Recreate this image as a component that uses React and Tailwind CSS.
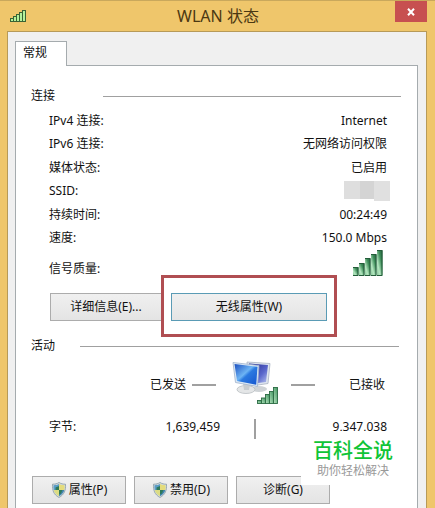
import React from "react";

const connectionRows = [
  { label: "IPv4 连接:", value: "Internet" },
  { label: "IPv6 连接:", value: "无网络访问权限" },
  { label: "媒体状态:", value: "已启用" },
  { label: "SSID:", value: null },
  { label: "持续时间:", value: "00:24:49" },
  { label: "速度:", value: "150.0 Mbps" },
];

const buttonClasses =
  "h-7 border border-[#acacac] bg-linear-to-b from-[#f0f0f0] to-[#e4e4e4] flex items-center justify-center";

const TitleSignal = () => (
  <svg className="w-4 h-3" viewBox="0 0 16 12" shapeRendering="crispEdges">
    <path
      d="M.5 11.5v-3h3v-2h3v-2h3v-2h3v-2h3v11zM3.5 8.5v3M6.5 6.5v5M9.5 4.5v7M12.5 2.5v9"
      fill="#b4f29c"
      stroke="#3a6334"
      strokeWidth="1"
    />
  </svg>
);

const qualityBars = [
  { x: 0, y: 17 },
  { x: 6, y: 13 },
  { x: 12, y: 8 },
  { x: 18, y: 4 },
  { x: 24, y: 0 },
];

const QualitySignal = () => (
  <svg className="w-[30px] h-[26px]" viewBox="0 0 30 26">
    <defs>
      <linearGradient id="qualityBar" x1="1" y1="0" x2="0" y2="1">
        <stop offset="0" stopColor="#1d5c36" />
        <stop offset="0.35" stopColor="#3f8f5b" />
        <stop offset="0.7" stopColor="#b4e6bf" />
        <stop offset="1" stopColor="#86c698" />
      </linearGradient>
    </defs>
    {qualityBars.map(({ x, y }) => (
      <g key={x}>
        <rect x={x} y={y} width="5.500" height={26 - y} fill="url(#qualityBar)" />
        <path d={`M${x} ${y + 0.5}h5v${25 - y}h-5`} fill="none" stroke="#245c3a" strokeWidth="1" />
      </g>
    ))}
  </svg>
);

const Monitors = () => (
  <svg className="w-12 h-11" viewBox="0 0 48 44">
    <defs>
      <linearGradient id="screenFront" x1="0" y1="0" x2="1" y2="1">
        <stop offset="0" stopColor="#1c4fc0" />
        <stop offset="0.45" stopColor="#6db4f4" />
        <stop offset="0.55" stopColor="#2b79e0" />
        <stop offset="1" stopColor="#1556cf" />
      </linearGradient>
      <linearGradient id="screenBack" x1="0" y1="0" x2="1" y2="1">
        <stop offset="0" stopColor="#20248c" />
        <stop offset="0.6" stopColor="#5a68cc" />
        <stop offset="1" stopColor="#bcc8f2" />
      </linearGradient>
      <linearGradient id="miniBars" x1="1" y1="0" x2="0" y2="1">
        <stop offset="0" stopColor="#3f9560" />
        <stop offset="1" stopColor="#b5e2bd" />
      </linearGradient>
    </defs>
    <ellipse cx="27" cy="28" rx="8" ry="3" fill="#cfd3d6" />
    <path d="M15 1l23 1.500-2 20-20 3z" fill="#dfe6ef" stroke="#a9b3c2" strokeWidth="0.8" />
    <path d="M17 2.500l19 1.500-2 17-16 2z" fill="url(#screenBack)" />
    <ellipse cx="14" cy="28.500" rx="9" ry="4" fill="#e4e6e7" stroke="#b9bec2" strokeWidth="0.8" />
    <path d="M11 22l7 2-1 5h-5z" fill="#c7ccd0" />
    <path d="M1 1.500l26 3-1.500 21L3.500 21.500z" fill="#dbe8f5" stroke="#9fb3cb" strokeWidth="0.8" />
    <path d="M2.500 3l23 2.700-1.300 18L5 20z" fill="url(#screenFront)" />
    <g fill="url(#miniBars)" stroke="#2b6a43" strokeWidth="0.9">
      <rect x="25.500" y="39.500" width="4" height="3" />
      <rect x="29.500" y="37" width="4" height="5.500" />
      <rect x="33.500" y="33.500" width="4" height="9" />
      <rect x="37.500" y="30.500" width="4" height="12" />
      <rect x="41.500" y="26.500" width="4" height="16" />
    </g>
  </svg>
);

const Shield = () => (
  <svg className="w-4 h-4" viewBox="0 0 16 16">
    <path d="M8 .5c2 1.300 4 1.700 6.500 1.700.3 6-1 10.300-6.500 13.300C2.500 12.500 1.200 8.200 1.500 2.200 4 2.200 6 1.800 8 .5z" fill="#d5dde0" stroke="#8799a2" strokeWidth="0.8" />
    <path d="M8 2v6H2.700C2.400 6.500 2.400 5 2.500 3.200 4.800 3.200 6.500 2.800 8 2z" fill="#5a9cc6" />
    <path d="M8 2c1.500.8 3.200 1.200 5.500 1.200.1 1.800.1 3.300-.2 4.800H8z" fill="#e4dc7c" />
    <path d="M8 8v6.300C5 12.600 3.400 10.700 2.700 8z" fill="#dcdc84" />
    <path d="M8 8h5.300c-.7 2.700-2.300 4.600-5.300 6.300z" fill="#4384b0" />
    <path d="M4.500 5.500L8 4v4H4.500zM8 8h3.500L10 11.500 8 12.500z" fill="#2d7a5a" />
  </svg>
);

const SectionTitle = ({ title, gap }) => (
  <div className={"flex items-center h-5 " + gap}>
    <h2>{title}</h2>
    <div className="flex-1 h-px bg-[#a0a0a0]" />
  </div>
);

const Watermark = () => (
  <div className="absolute right-3 -top-2 w-26 h-[54px] bg-white flex flex-col items-center pt-2 font-['Liberation_Sans','Noto_Sans_CJK_SC',sans-serif]">
    <span className="text-[20px] leading-6 font-medium text-[#10c437]">百科全说</span>
    <span className="text-[12px] leading-4 text-[#999999]">助你轻松解决</span>
  </div>
);

export default function App() {
  return (
    <div className="min-h-screen flex flex-col bg-[#efc66b] border-t border-[#c9a85c] pr-2 pl-[7px] text-[12px] text-[#111111] font-['Noto_Sans','Noto_Sans_CJK_SC',sans-serif]">
      <header className="h-[30px] flex items-start justify-between">
        <div className="w-8 pl-[3px] pt-[9px]">
          <TitleSignal />
        </div>
        <h1 className="text-[16px] leading-[30px] text-[#4b3812] pl-0.5">WLAN 状态</h1>
        <button aria-label="关闭" className="w-8 h-[21px] bg-[#c75050] flex items-center justify-center">
          <svg className="w-2 h-2" viewBox="0 0 8 8">
            <path d="M1 .8l6 6.400M7 .8L1 7.200" stroke="#ffffff" strokeWidth="2" />
          </svg>
        </button>
      </header>

      <main className="flex-1 flex flex-col bg-[#f0f0f0] border border-b-0 border-[#b79a58] px-[7px] pt-[9px]">
        <div role="tablist" className="flex">
          <button
            role="tab"
            aria-selected="true"
            className="relative -mb-px h-[25px] w-[52px] bg-white border border-b-0 border-[#a5abae] pl-[7px] pb-0.5 text-left"
          >
            常规
          </button>
        </div>

        <section className="flex-1 bg-white border border-b-0 border-[#a5abae] pl-[15px] mr-px pt-5">
          <div className="pr-4">
            <SectionTitle title="连接" gap="gap-12" />
          </div>
          <dl className="pl-[18px] pr-[30px] pt-0.5">
            {connectionRows.map(({ label, value }) => (
              <div key={label} className="flex justify-between items-center h-[23px] odd:mt-px first:mt-0 leading-4">
                <dt>{label}</dt>
                <dd>
                  {value || (
                    <span className="flex h-5 -mr-[3px]">
                      <span className="w-4 h-[18px] bg-[#dedede]" />
                      <span className="w-3.5 h-[18px] bg-[#d4d4d4]" />
                      <span className="w-4 h-5 bg-[#e0e0e0]" />
                    </span>
                  )}
                </dd>
              </div>
            ))}
            <div className="flex justify-between items-end h-7 leading-4">
              <dt>信号质量:</dt>
              <dd className="pr-1 pb-px">
                <QualitySignal />
              </dd>
            </div>
          </dl>

          <div className="flex pl-[19px] pr-20 -mt-0.5">
            <button className={buttonClasses + " w-[111px] mt-[18px] border-r-0"}>详细信息(E)...</button>
            <div className="flex-1 border-[3px] border-[#b04e52] px-[7px] pt-[15px] pb-[13px]">
              <button className="w-full h-7 border border-[#5a9bb5] bg-linear-to-b from-[#f0f0f0] to-[#e4e4e4]">
                无线属性(W)
              </button>
            </div>
          </div>

          <div className="pr-[18px] -mt-px">
            <SectionTitle title="活动" gap="gap-[25px]" />
          </div>
          <div className="flex items-center justify-between pl-[119px] pr-8 mt-[5px]">
            <span>已发送</span>
            <span className="w-6 h-0.5 bg-[#a0a0a0]" />
            <span className="pl-[11px] pr-1.5 pb-1">
              <Monitors />
            </span>
            <span className="w-6 h-0.5 bg-[#a0a0a0]" />
            <span className="pl-7">已接收</span>
          </div>

          <div className="flex items-center pl-[18px] pr-[30px] h-6 mt-1.5">
            <span className="flex-1">字节:</span>
            <span>1,639,459</span>
            <span className="w-0.5 h-5 mt-1 ml-[34px] bg-[#a0a0a0]" />
            <span className="w-[131px] text-right">9,347,038</span>
          </div>

          <div className="relative pt-[37px]">
            <div className="flex gap-2 pl-px">
              <button className={buttonClasses + " w-[94px] gap-0.5"}>
                <Shield />
                属性(P)
              </button>
              <button className={buttonClasses + " w-[94px] gap-0.5"}>
                <Shield />
                禁用(D)
              </button>
              <button className={buttonClasses + " w-[94px]"}>诊断(G)</button>
            </div>
            <Watermark />
          </div>
        </section>
      </main>
    </div>
  );
}
